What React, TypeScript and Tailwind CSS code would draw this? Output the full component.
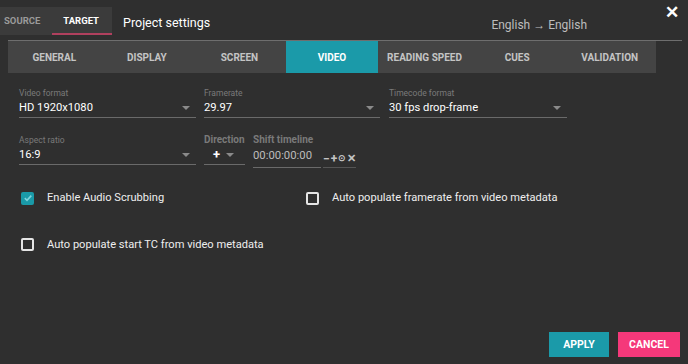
import React from "react";

const Arrow = () => (
  <svg width="8" height="5" viewBox="0 0 8 5" className="shrink-0">
    <path d="M0 0 L8 0 L4 4 Z" fill="#8a8a8a" />
  </svg>
);

function Select({ label, value, w }: { label: string; value: string; w: string }) {
  return (
    <div className={`${w} flex flex-col`}>
      <div className="text-[8.5px] leading-[12px] text-[#7a7a7a]">{label}</div>
      <div className="flex items-center justify-between h-[19px] border-b border-[#6a6a6a] pr-[6px]">
        <span className="text-[11.2px] text-white leading-[16px]">{value}</span>
        <Arrow />
      </div>
    </div>
  );
}

function Check({ checked, label }: { checked?: boolean; label: string }) {
  return (
    <div className="flex items-center gap-[13px]">
      {checked ? (
        <div className="w-[13px] h-[13px] rounded-[2px] bg-[#1a9aa8] flex items-center justify-center">
          <svg width="10" height="10" viewBox="0 0 10 10">
            <path d="M1.8 5.2 L4 7.3 L8.3 2.6" fill="none" stroke="#7fd3dc" strokeWidth="1.6" />
          </svg>
        </div>
      ) : (
        <div className="w-[13px] h-[13px] rounded-[2px] border-2 border-[#e5e5e5]" />
      )}
      <span className="text-[11.1px] text-[#eeeeee]">{label}</span>
    </div>
  );
}

export default function App() {
  const tabs = ["GENERAL", "DISPLAY", "SCREEN", "VIDEO", "READING SPEED", "CUES", "VALIDATION"];
  return (
    <div
      className="w-[688px] h-[364px] bg-[#2f2f2f] overflow-hidden relative"
      style={{ fontFamily: "Roboto, 'Noto Sans', sans-serif" }}
    >
      {/* header */}
      <div className="h-[40px] flex items-start relative">
        <div className="mt-[7px] h-[28px] w-[112px] bg-[#3b3b3b] flex items-center relative">
          <span className="ml-[4px] text-[9.5px] font-bold text-[#9a9a9a]">SOURCE</span>
          <span className="ml-[23px] text-[9.5px] font-bold text-white">TARGET</span>
          <div className="absolute left-[52px] right-0 bottom-0 h-[2px] bg-[#b0405e]" />
        </div>
        <div className="ml-[11px] mt-[14px] text-[12.5px] text-white">Project settings</div>
        <div className="ml-auto mr-[101px] mt-[16px] text-[12px] text-[#bdbdbd]">English → English</div>
        <div className="absolute right-[9px] top-0 text-[17px] font-bold text-white">✕</div>
      </div>
      {/* line */}
      <div className="ml-[8px] mr-[6px] h-[1px] bg-[#6e6e6e]" />
      {/* tabs */}
      <div className="ml-[8px] w-[648px] h-[32px] bg-[#444444] grid grid-cols-7">
        {tabs.map((t) => (
          <div
            key={t}
            className={`flex items-center justify-center text-[10px] font-bold ${
              t === "VIDEO" ? "bg-[#1b9aa9] text-white" : "text-[#c4c4c4]"
            }`}
          >
            {t}
          </div>
        ))}
      </div>
      {/* row 1 */}
      <div className="mt-[14px] ml-[19px] flex gap-[8px]">
        <Select label="Video format" value="HD 1920x1080" w="w-[177px]" />
        <Select label="Framerate" value="29.97" w="w-[176px]" />
        <div className="ml-[1px]">
          <Select label="Timecode format" value="30 fps drop-frame" w="w-[178px]" />
        </div>
      </div>
      {/* row 2 */}
      <div className="mt-[16px] ml-[19px] flex items-start gap-[8px]">
        <Select label="Aspect ratio" value="16:9" w="w-[177px]" />
        <div className="w-[41px] flex flex-col">
          <div className="text-[10px] leading-[12px] font-bold text-[#7a7a7a]">Direction</div>
          <div className="flex items-center h-[19px] border-b border-[#6a6a6a] pl-[9px] gap-[6px]">
            <span className="text-[13px] font-bold text-white">+</span>
            <Arrow />
          </div>
        </div>
        <div className="flex items-end">
          <div className="w-[68px] flex flex-col">
            <div className="text-[10px] leading-[12px] font-bold text-[#7a7a7a]">Shift timeline</div>
            <div className="flex items-center h-[22px] border-b border-[#6a6a6a]">
              <span className="text-[11.3px] text-[#bdbdbd]">00:00:00:00</span>
            </div>
          </div>
          <div className="ml-[2px] w-[33px] h-[18px] flex items-center border-b border-[#555] text-[#c4c4c4] text-[12px] font-bold leading-none gap-[1px]">
            <span>−</span>
            <span>+</span>
            <span className="text-[9px]">⊙</span>
            <span className="text-[11px]">✕</span>
          </div>
        </div>
      </div>
      {/* checkboxes */}
      <div className="mt-[22px] ml-[21px] flex">
        <div className="w-[285px]">
          <Check checked label="Enable Audio Scrubbing" />
        </div>
        <Check label="Auto populate framerate from video metadata" />
      </div>
      <div className="mt-[30px] ml-[21px] flex">
        <Check label="Auto populate start TC from video metadata" />
      </div>
      {/* buttons */}
      <div className="absolute left-0 right-0 top-[332px] flex justify-end pr-[8px] gap-[9px]">
        <div className="w-[60px] h-[25px] bg-[#1b9aa9] flex items-center justify-center text-[10.5px] font-bold text-white">
          APPLY
        </div>
        <div className="w-[62px] h-[25px] bg-[#f5387a] flex items-center justify-center text-[10.5px] font-bold text-white">
          CANCEL
        </div>
      </div>
    </div>
  );
}
